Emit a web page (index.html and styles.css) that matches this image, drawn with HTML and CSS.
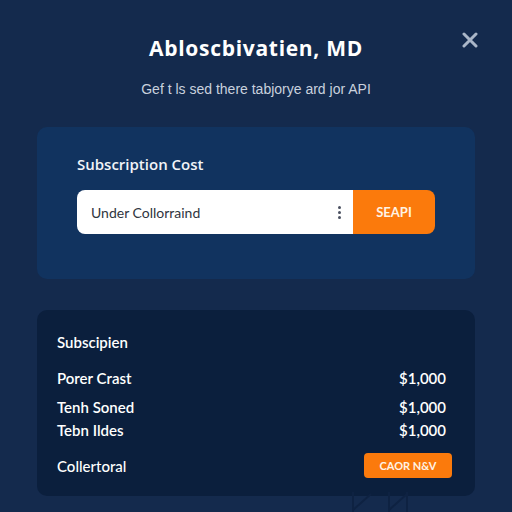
FILE: index.html
```html
<!DOCTYPE html>
<html lang="en">
<head>
    <meta charset="UTF-8">
    <meta name="viewport" content="width=device-width, initial-scale=1.0">
    <title>Abloscbivatien, MD</title>
    <link rel="stylesheet" href="styles.css">
</head>
<body>
    <div class="modal">
        <button class="close-btn" aria-label="Close">
            <svg width="16" height="16" viewBox="0 0 16 16">
                <path d="M2 2 L14 14 M14 2 L2 14" stroke="#aab6c8" stroke-width="3" stroke-linecap="round"/>
            </svg>
        </button>

        <div class="modal-header">
            <h1>Abloscbivatien, MD</h1>
            <p>Gef t ls sed there tabjorye ard jor API</p>
        </div>

        <div class="card card-search">
            <h2>Subscription Cost</h2>
            <div class="search-row">
                <div class="search-input">
                    <span>Under Collorraind</span>
                    <span class="kebab"><i></i><i></i><i></i></span>
                </div>
                <button class="search-btn">SEAPI</button>
            </div>
        </div>

        <div class="card card-summary">
            <h3>Subscipien</h3>
            <div class="row first">
                <span>Porer Crast</span>
                <span class="price">$1,000</span>
            </div>
            <div class="row second">
                <span>Tenh Soned</span>
                <span class="price">$1,000</span>
            </div>
            <div class="row third">
                <span>Tebn Ildes</span>
                <span class="price">$1,000</span>
            </div>
            <div class="row total">
                <span>Collertoral</span>
                <button class="buy-btn">CAOR N&amp;V</button>
            </div>
        </div>

        <!-- faint frame lines under the summary -->
        <svg class="deco" width="70" height="20" viewBox="0 0 70 20">
            <path d="M4 0 V20 M58 0 V20 M4 18 L22 2 M40 18 L58 2 M40 0 V20" stroke="#0e2242" stroke-width="2" fill="none"/>
        </svg>
    </div>
</body>
</html>
```

FILE: styles.css
```css
body {
    margin: 0;
    min-height: 512px;
    background-color: #142a4d;
    font-family: 'Lato', 'Open Sans', sans-serif;
    color: #ffffff;
}
.modal {
    position: relative;
    width: 438px;
    margin: 0 auto;
    padding-top: 36px;
}
.close-btn {
    position: absolute;
    top: 32px;
    right: -3px;
    background: none;
    border: none;
    padding: 0;
    cursor: pointer;
}
.modal-header {
    text-align: center;
}
.modal-header h1 {
    margin: 0;
    font-family: 'Open Sans', sans-serif;
    font-size: 21px;
    line-height: 24px;
    font-weight: 700;
    letter-spacing: 0.7px;
}
.modal-header p {
    margin: 19px 0 0;
    font-family: 'Liberation Sans', Arial, sans-serif;
    font-size: 14px;
    line-height: 20px;
    color: #c9d1de;
}
.card {
    border-radius: 10px;
    box-sizing: border-box;
}
.card-search {
    margin-top: 28px;
    height: 152px;
    padding: 28px 40px 0;
    background-color: #11335f;
}
.card-search h2 {
    margin: 0;
    font-family: 'Open Sans', sans-serif;
    font-size: 15px;
    line-height: 19px;
    font-weight: 600;
    color: #f1f4f8;
}
.search-row {
    display: flex;
    margin-top: 16px;
    height: 44px;
}
.search-input {
    flex: 1;
    display: flex;
    align-items: center;
    justify-content: space-between;
    padding: 0 12px 0 14px;
    background-color: #ffffff;
    border-radius: 8px 0 0 8px;
    color: #2f3540;
    font-size: 14px;
}
.kebab {
    display: flex;
    flex-direction: column;
    gap: 2px;
}
.kebab i {
    width: 3px;
    height: 3px;
    border-radius: 50%;
    background-color: #4a5060;
}
.search-btn {
    width: 82px;
    border: none;
    border-radius: 0 8px 8px 0;
    background-color: #fb7a0c;
    color: #fff3e4;
    font-family: inherit;
    font-size: 13px;
    font-weight: 700;
    cursor: pointer;
}
.card-summary {
    margin-top: 31px;
    height: 186px;
    padding: 23px 23px 0 20px;
    background-color: #0b1f3d;
    font-size: 15px;
}
.card-summary h3 {
    margin: 0;
    font-size: 15px;
    line-height: 18px;
    font-weight: 600;
}
.row {
    display: flex;
    justify-content: space-between;
    align-items: center;
    line-height: 18px;
    font-weight: 600;
}
.row .price {
    padding-right: 6px;
}
.row.first {
    margin-top: 18px;
}
.row.second {
    margin-top: 11px;
}
.row.third {
    margin-top: 5px;
}
.row.total {
    margin-top: 14px;
    font-weight: 500;
}
.buy-btn {
    width: 88px;
    height: 25px;
    border: none;
    border-radius: 4px;
    background-color: #fb7a0c;
    color: #fff3e4;
    font-family: inherit;
    font-size: 11px;
    font-weight: 700;
    cursor: pointer;
}
.deco {
    position: absolute;
    left: 312px;
    top: 492px;
}
```
